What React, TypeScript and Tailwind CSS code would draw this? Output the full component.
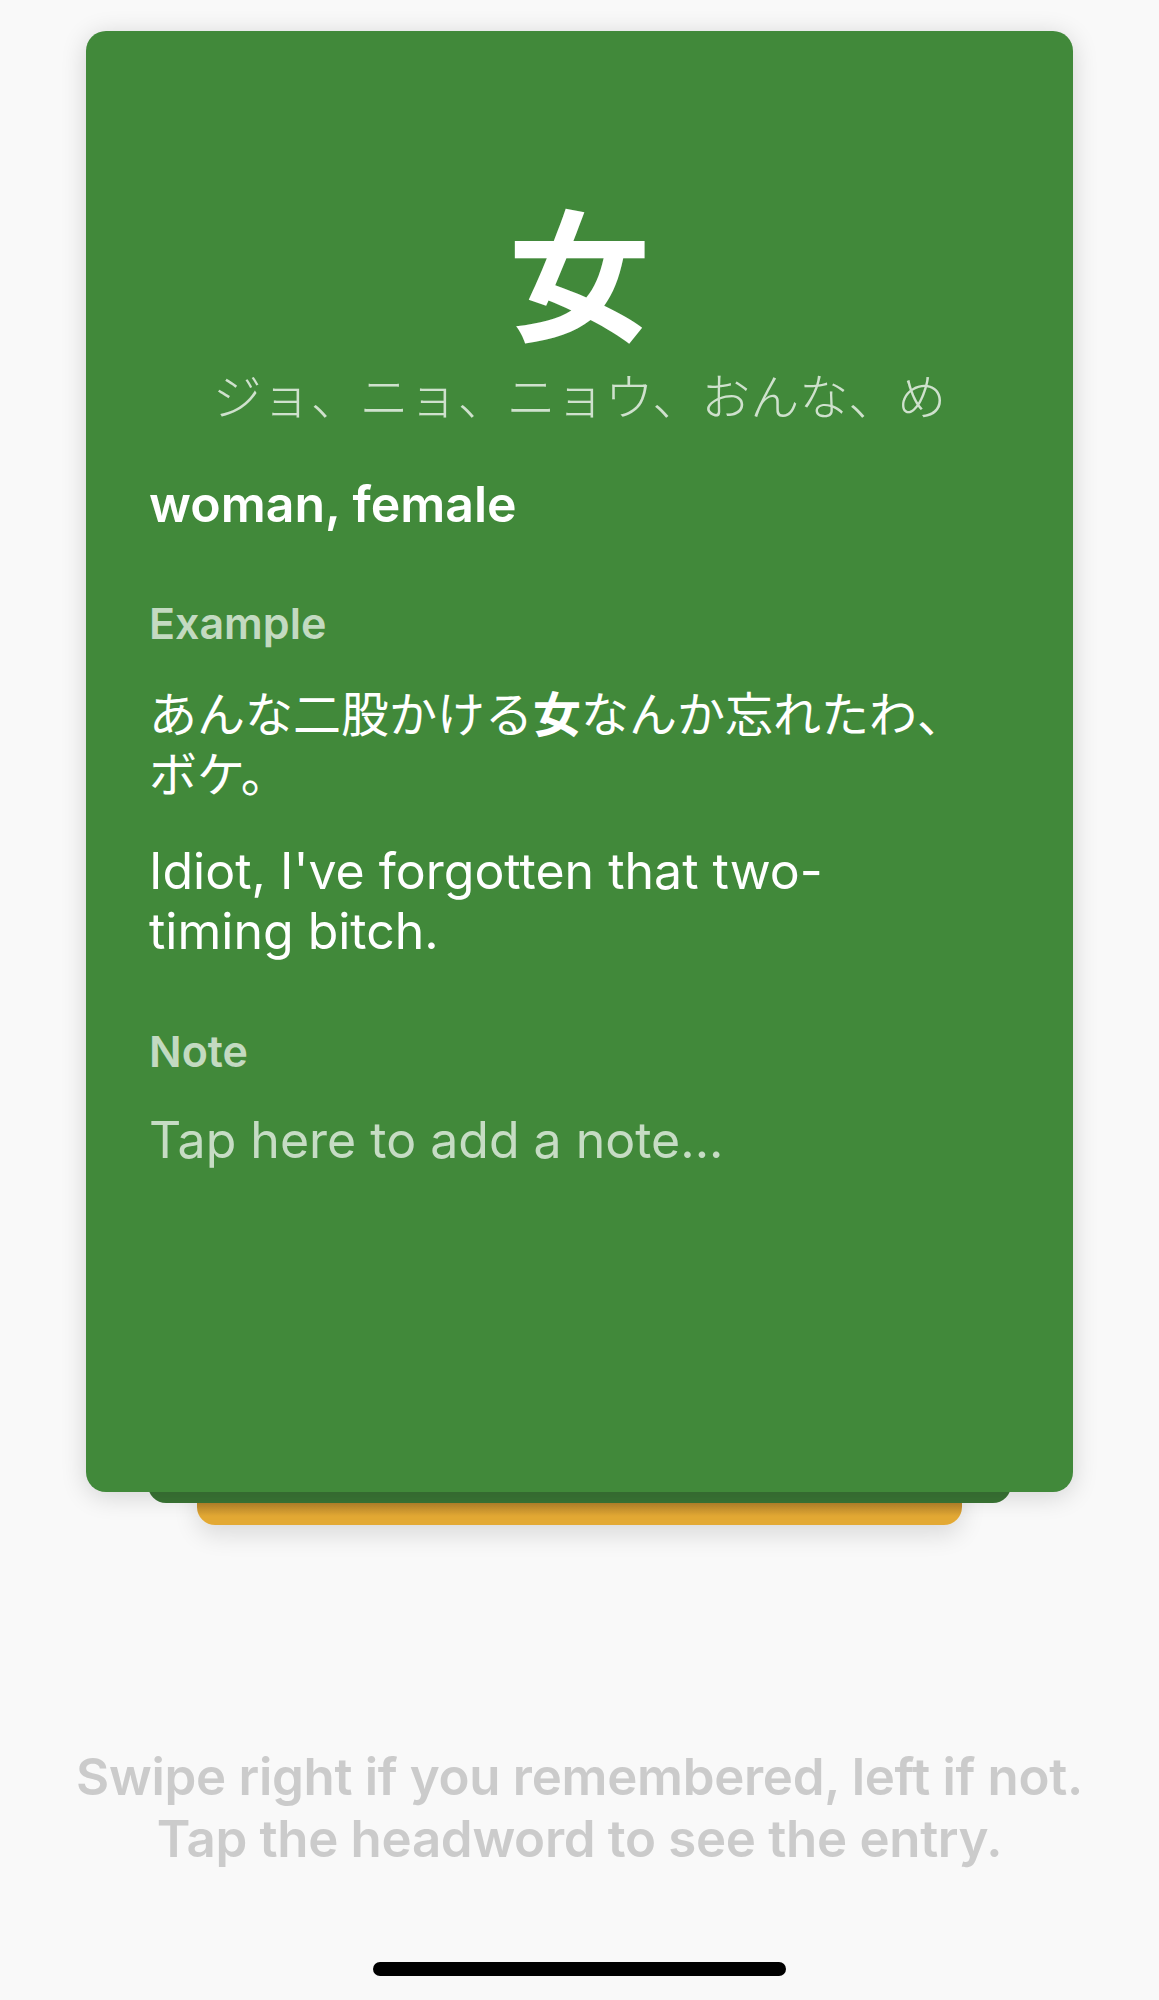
export default function App() {
  return (
    <div className="min-h-[2000px] bg-[#f9f9f9] flex flex-col items-center font-['Inter','Noto_Sans_CJK_JP',sans-serif]">
      {/* card stack */}
      <div className="relative mt-[31px] w-[987px] h-[1461px]">
        <div className="absolute left-[111px] right-[111px] bottom-[-33px] h-[60px] rounded-b-[18px] bg-[linear-gradient(to_bottom,#b5822a_63%,#e3a934_85%)] shadow-[0_10px_24px_rgba(0,0,0,0.12)]" />
        <div className="absolute left-[62px] right-[62px] bottom-[-11px] h-[60px] rounded-b-[18px] bg-[#3a7535]" />
        <div className="relative h-full rounded-[20px] bg-[#41893a] shadow-[0_4px_26px_rgba(0,0,0,0.16)] pt-[166px] px-[63px]">
          <div className="text-center text-white text-[142px] leading-none font-bold font-['Noto_Sans_CJK_JP',sans-serif]">女</div>
          <div className="mt-[31px] text-center text-white/75 text-[49px] leading-[48px] font-light font-['Noto_Sans_CJK_JP',sans-serif]">
            ジョ、ニョ、ニョウ、おんな、め
          </div>

          <div className="mt-[56px] text-white text-[50px] leading-[60px] font-semibold">woman, female</div>

          <div className="mt-[63px] text-white/70 text-[43px] leading-[52px] font-semibold">Example</div>
          <div className="mt-[32px] text-white text-[48px] leading-[60px] font-['Noto_Sans_CJK_JP',sans-serif]">
            あんな二股かける<span className="font-bold">女</span>なんか忘れたわ、
            <br />
            ボケ。
          </div>
          <div className="mt-[40px] text-white text-[50px] leading-[60px]">
            Idiot, I've forgotten that two-
            <br />
            timing bitch.
          </div>

          <div className="mt-[64px] text-white/70 text-[43px] leading-[52px] font-semibold">Note</div>
          <div className="mt-[33px] text-white/70 text-[50px] leading-[60px]">Tap here to add a note...</div>
        </div>
      </div>

      <div className="mt-[254px] text-center text-[#cbcbcb] text-[51px] leading-[62px] font-semibold tracking-[-0.3px]">
        <div>Swipe right if you remembered, left if not.</div>
        <div>Tap the headword to see the entry.</div>
      </div>

      <div className="mt-[92px] w-[413px] h-[14px] rounded-full bg-black" />
    </div>
  )
}
